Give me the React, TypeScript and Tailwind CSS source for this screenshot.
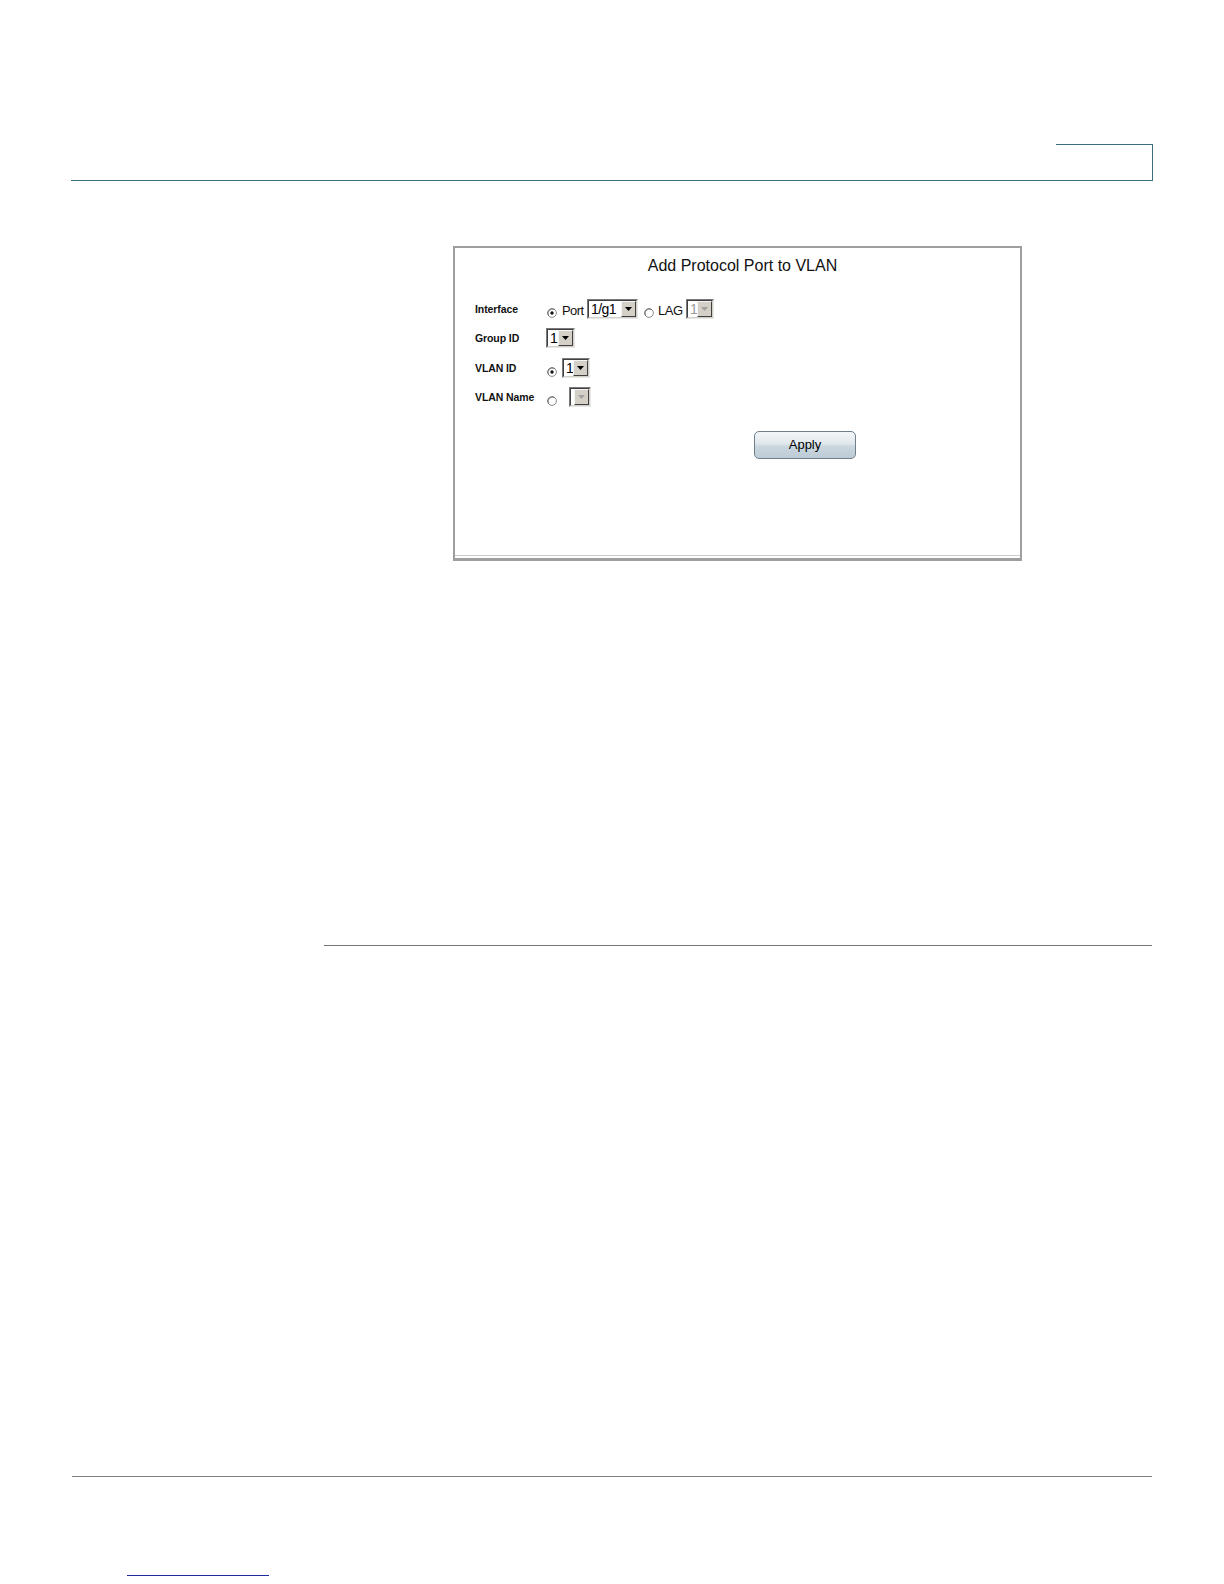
import React from "react";

const FONT = { fontFamily: '"Liberation Sans", Arial, sans-serif' };

function Radio({ checked }: { checked?: boolean }) {
  return (
    <svg width="10" height="10" viewBox="0 0 10 10" className="shrink-0 mt-[8px]">
      <circle cx="5" cy="5" r="4.4" fill="#ffffff" stroke="#8a8a8a" strokeWidth="1" />
      <path d="M1.6 7.6 A4.4 4.4 0 0 1 7.6 1.6" fill="none" stroke="#5a5a5a" strokeWidth="0.8" />
      {checked && <circle cx="5" cy="5" r="1.7" fill="#111111" />}
    </svg>
  );
}

function Select({
  width,
  text,
  disabled,
}: {
  width: number;
  text?: string;
  disabled?: boolean;
}) {
  return (
    <div
      className="flex h-[20px] shrink-0 border-t border-l border-t-[#7a7a7a] border-l-[#7a7a7a] border-b border-r border-b-[#e8e8e8] border-r-[#e8e8e8]"
      style={{ width }}
    >
      <div className="flex flex-1 min-w-0 border-t border-l border-t-[#404040] border-l-[#404040] border-b border-r border-b-[#d4d0c8] border-r-[#d4d0c8]">
        <div
          className={`flex-1 min-w-0 overflow-hidden whitespace-nowrap pl-[2px] text-[14px] leading-[16px] tracking-[-0.6px] ${
            disabled ? "bg-[#ffffff] text-[#9a9a9a]" : "bg-white text-black"
          }`}
        >
          {text}
        </div>
        <div className="flex h-[16px] w-[15px] shrink-0 items-center justify-center bg-[#d4d0c8] border-t border-l border-t-[#f4f4f4] border-l-[#f4f4f4] border-b border-r border-b-[#404040] border-r-[#404040]">
          <svg width="7" height="4" viewBox="0 0 7 4">
            <path d="M0 0 L7 0 L3.5 4 Z" fill={disabled ? "#a0a0a0" : "#000000"} />
          </svg>
        </div>
      </div>
    </div>
  );
}

function Row({ label, children }: { label: string; children: React.ReactNode }) {
  return (
    <div className="flex h-[29.5px] items-center">
      <div className="w-[71px] shrink-0 text-[10.5px] font-bold leading-[12px] text-[#111111] tracking-[-0.1px]">
        {label}
      </div>
      <div className="flex items-center">{children}</div>
    </div>
  );
}

export default function App() {
  return (
    <div className="relative h-[1584px] w-[1224px] bg-white overflow-hidden" style={FONT}>
      {/* Header rule with tab box */}
      <div className="ml-[71px] mt-[144px] flex h-[37px] w-[1082px]">
        <div className="flex-1 border-b border-[#3a6f80]" />
        <div className="w-[97px] border-t border-r border-b border-[#3a6f80]" />
      </div>

      {/* Screenshot frame */}
      <div className="ml-[453px] mt-[65px] w-[569px] border-t-2 border-l-2 border-r-2 border-b-[3px] border-[#9e9e9e] bg-white">
        <div className="h-[307px] pt-[9px] pl-[10px]">
          <div className="text-center text-[16px] leading-[18px] text-[#111111]">
            Add Protocol Port to VLAN
          </div>
        </div>
        <div className="-mt-[307px] h-[307px] pl-[20px] pt-[46px]">
          <Row label="Interface">
            <span className="ml-[1px] shrink-0">
              <Radio checked />
            </span>
            <span className="ml-[5px] mt-[5px] w-[22px] shrink-0 whitespace-nowrap text-[13px] leading-[16px] tracking-[-0.6px] text-[#111111]">
              Port
            </span>
            <span className="ml-[3px] shrink-0">
              <Select width={51} text="1/g1" />
            </span>
            <span className="ml-[6px] shrink-0">
              <Radio />
            </span>
            <span className="ml-[4px] mt-[5px] w-[25px] shrink-0 whitespace-nowrap text-[13px] leading-[16px] tracking-[-0.5px] text-[#111111]">
              LAG
            </span>
            <span className="ml-[3px] shrink-0">
              <Select width={28} text="1" disabled />
            </span>
          </Row>
          <Row label="Group ID">
            <Select width={29} text="1" />
          </Row>
          <Row label="VLAN ID">
            <span className="ml-[1px] shrink-0">
              <Radio checked />
            </span>
            <span className="ml-[5px] shrink-0">
              <Select width={28} text="1" />
            </span>
          </Row>
          <Row label="VLAN Name">
            <span className="ml-[1px] shrink-0">
              <Radio />
            </span>
            <span className="ml-[12px] shrink-0">
              <Select width={22} text="" disabled />
            </span>
          </Row>
          <div className="mt-[19px] pl-[279px]">
            <button
              className="flex h-[28px] w-[102px] items-center justify-center rounded-[5px] border border-[#6f808c] text-[13px] leading-[16px] text-black"
              style={{
                ...FONT,
                background:
                  "linear-gradient(to bottom, #f3f6f8 0%, #e1e8ed 45%, #cbd7df 55%, #bccbd5 100%)",
              }}
            >
              Apply
            </button>
          </div>
        </div>
        <div className="h-px bg-[#cdcdcd]" />
        <div className="h-[2px] bg-white" />
      </div>

      {/* Mid rule */}
      <div className="ml-[324px] mt-[384px] h-px w-[828px] bg-[#777777]" />

      {/* Footer rule */}
      <div className="ml-[72px] mt-[530px] h-px w-[1080px] bg-[#7f7f7f]" />

      {/* Blue link underline */}
      <div className="ml-[127px] mt-[98px] h-px w-[142px] bg-[#1f2c9c]" />
    </div>
  );
}
